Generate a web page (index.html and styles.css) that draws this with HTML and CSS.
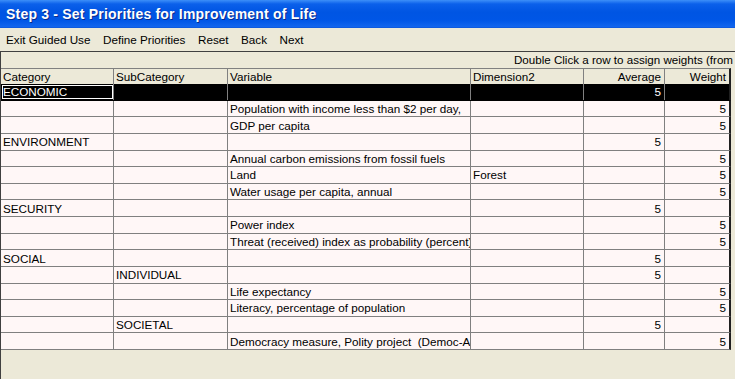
FILE: index.html
```html
<!DOCTYPE html>
<html lang="en">
<head>
    <meta charset="UTF-8">
    <title>Step 3 - Set Priorities for Improvement of Life</title>
    <link rel="stylesheet" href="styles.css">
</head>
<body>
    <div class="window">
        <div class="titlebar">Step 3 - Set Priorities for Improvement of Life</div>
        <div class="menubar">
            <span class="menu-item">Exit Guided Use</span>
            <span class="menu-item">Define Priorities</span>
            <span class="menu-item">Reset</span>
            <span class="menu-item">Back</span>
            <span class="menu-item">Next</span>
        </div>
        <div class="grid">
            <div class="caption"><span>Double Click a row to assign weights (from</span></div>
            <div class="row head">
                <div class="cell">Category</div>
                <div class="cell">SubCategory</div>
                <div class="cell">Variable</div>
                <div class="cell">Dimension2</div>
                <div class="cell num">Average</div>
                <div class="cell num">Weight</div>
            </div>
            <div class="row selected">
                <div class="cell focus">ECONOMIC</div>
                <div class="cell"></div>
                <div class="cell"></div>
                <div class="cell"></div>
                <div class="cell num">5</div>
                <div class="cell num"></div>
            </div>
            <div class="row">
                <div class="cell"></div>
                <div class="cell"></div>
                <div class="cell">Population with income less than $2 per day,</div>
                <div class="cell"></div>
                <div class="cell num"></div>
                <div class="cell num">5</div>
            </div>
            <div class="row">
                <div class="cell"></div>
                <div class="cell"></div>
                <div class="cell">GDP per capita</div>
                <div class="cell"></div>
                <div class="cell num"></div>
                <div class="cell num">5</div>
            </div>
            <div class="row">
                <div class="cell">ENVIRONMENT</div>
                <div class="cell"></div>
                <div class="cell"></div>
                <div class="cell"></div>
                <div class="cell num">5</div>
                <div class="cell num"></div>
            </div>
            <div class="row">
                <div class="cell"></div>
                <div class="cell"></div>
                <div class="cell">Annual carbon emissions from fossil fuels</div>
                <div class="cell"></div>
                <div class="cell num"></div>
                <div class="cell num">5</div>
            </div>
            <div class="row">
                <div class="cell"></div>
                <div class="cell"></div>
                <div class="cell">Land</div>
                <div class="cell">Forest</div>
                <div class="cell num"></div>
                <div class="cell num">5</div>
            </div>
            <div class="row">
                <div class="cell"></div>
                <div class="cell"></div>
                <div class="cell">Water usage per capita, annual</div>
                <div class="cell"></div>
                <div class="cell num"></div>
                <div class="cell num">5</div>
            </div>
            <div class="row">
                <div class="cell">SECURITY</div>
                <div class="cell"></div>
                <div class="cell"></div>
                <div class="cell"></div>
                <div class="cell num">5</div>
                <div class="cell num"></div>
            </div>
            <div class="row">
                <div class="cell"></div>
                <div class="cell"></div>
                <div class="cell">Power index</div>
                <div class="cell"></div>
                <div class="cell num"></div>
                <div class="cell num">5</div>
            </div>
            <div class="row">
                <div class="cell"></div>
                <div class="cell"></div>
                <div class="cell">Threat (received) index as probability (percent)</div>
                <div class="cell"></div>
                <div class="cell num"></div>
                <div class="cell num">5</div>
            </div>
            <div class="row">
                <div class="cell">SOCIAL</div>
                <div class="cell"></div>
                <div class="cell"></div>
                <div class="cell"></div>
                <div class="cell num">5</div>
                <div class="cell num"></div>
            </div>
            <div class="row">
                <div class="cell"></div>
                <div class="cell">INDIVIDUAL</div>
                <div class="cell"></div>
                <div class="cell"></div>
                <div class="cell num">5</div>
                <div class="cell num"></div>
            </div>
            <div class="row">
                <div class="cell"></div>
                <div class="cell"></div>
                <div class="cell">Life expectancy</div>
                <div class="cell"></div>
                <div class="cell num"></div>
                <div class="cell num">5</div>
            </div>
            <div class="row">
                <div class="cell"></div>
                <div class="cell"></div>
                <div class="cell">Literacy, percentage of population</div>
                <div class="cell"></div>
                <div class="cell num"></div>
                <div class="cell num">5</div>
            </div>
            <div class="row">
                <div class="cell"></div>
                <div class="cell">SOCIETAL</div>
                <div class="cell"></div>
                <div class="cell"></div>
                <div class="cell num">5</div>
                <div class="cell num"></div>
            </div>
            <div class="row">
                <div class="cell"></div>
                <div class="cell"></div>
                <div class="cell">Democracy measure, Polity project &nbsp;(Democ-Autoc)</div>
                <div class="cell"></div>
                <div class="cell num"></div>
                <div class="cell num">5</div>
            </div>
        </div>
    </div>
</body>
</html>
```

FILE: styles.css
```css
* {
    margin: 0;
    padding: 0;
    box-sizing: border-box;
}

body {
    width: 735px;
    height: 379px;
    overflow: hidden;
    background: #ece9d8;
    font-family: 'Liberation Sans', Arial, sans-serif;
}

.window {
    display: flex;
    flex-direction: column;
    height: 379px;
}

/* XP style caption */
.titlebar {
    height: 28px;
    padding-left: 6px;
    display: flex;
    align-items: center;
    color: #fff;
    font-size: 14px;
    font-weight: bold;
    letter-spacing: 0.2px;
    text-shadow: 1px 1px 0 #0a2a8c;
    background: linear-gradient(#3d8ff8 0, #0b60ea 4px, #0055e3 12px, #0056e6 20px, #1366ee 27px, #0a4fd0 28px);
}

.menubar {
    height: 23px;
    display: flex;
    align-items: center;
    padding-bottom: 1px;
    font-size: 11.7px;
    color: #000;
}

.menu-item {
    padding: 0 6.5px 0 6px;
}

.grid {
    flex: 1;
    border-top: 1px solid #404040;
    border-left: 1px solid #404040;
    overflow: hidden;
}

.caption {
    height: 16px;
    display: flex;
    justify-content: flex-end;
    padding-right: 2px;
    white-space: nowrap;
    overflow: hidden;
    font-size: 11.6px;
    line-height: 16px;
}

.row {
    width: 730px;
    height: 16.625px;
    display: grid;
    grid-template-columns: 113px 114px 243px 113px 81px 64px;
    background: #fff7f7;
    border-bottom: 1px solid #808080;
    border-right: 2px solid #202020;
    font-size: 11.7px;
}

.row.head {
    height: 16px;
    background: #ece9d8;
    border-top: 1px solid #808080;
    border-bottom: none;
    font-size: 11.7px;
}

.cell {
    border-right: 1px solid #808080;
    padding: 0 3px 0 2px;
    white-space: nowrap;
    overflow: hidden;
    display: flex;
    align-items: center;
}

.cell:last-child {
    border-right: none;
}

.cell.num {
    justify-content: flex-end;
    padding-right: 3px;
}

.row.selected {
    background: #000;
    color: #fff;
    border-bottom-color: #000;
}

.cell.focus {
    outline: 1px solid #fff;
    outline-offset: -2px;
}
```
